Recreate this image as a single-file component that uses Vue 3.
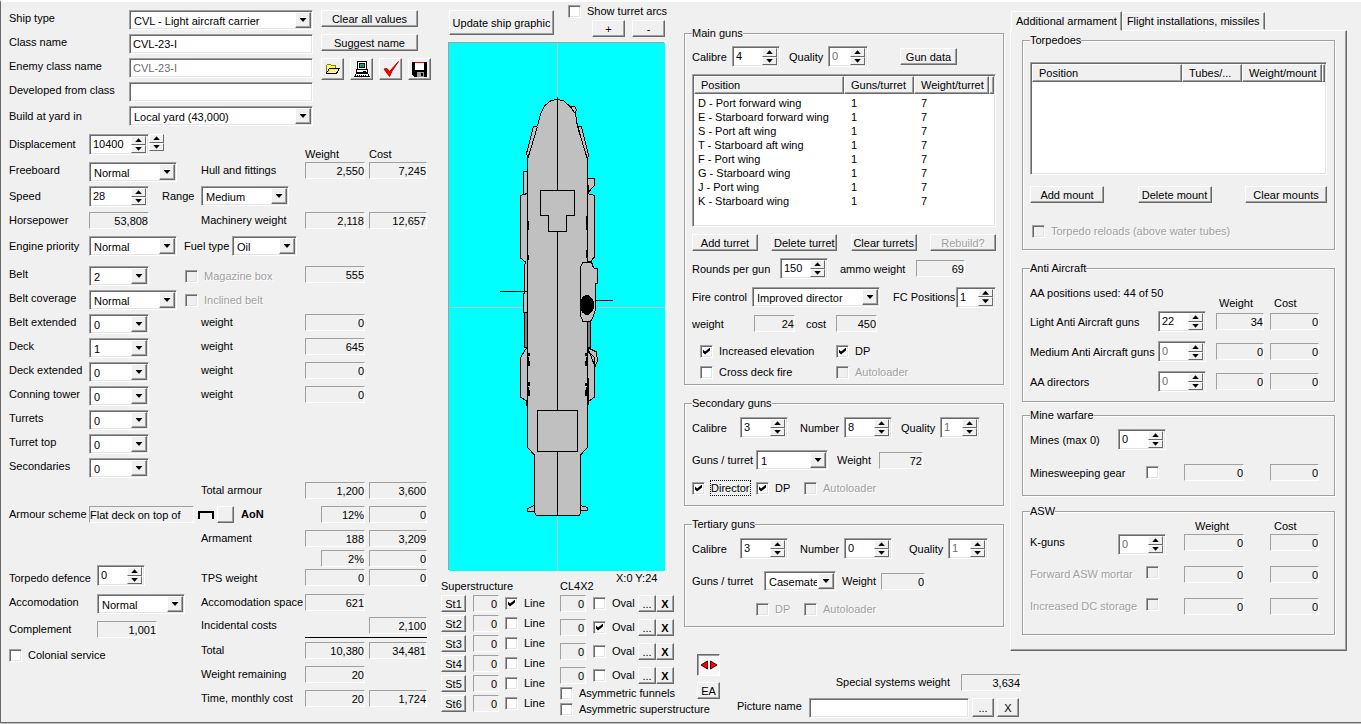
<script setup>
import { h } from 'vue'

const Spin = (p) =>
  h('span', { class: 'spin' }, [
    h('input', { type: 'text', inputmode: 'numeric', id: p.id, value: p.value, disabled: p.disabled }),
    h(Steps, { name: p.id })
  ])
Spin.props = { id: String, value: [String, Number], disabled: Boolean }

const Steps = (p) =>
  h('span', { class: 'steps' }, [
    h('button', { type: 'button', class: 'up', 'aria-label': p.name + ' up' }, [h('i')]),
    h('button', { type: 'button', class: 'down', 'aria-label': p.name + ' down' }, [h('i')])
  ])
Steps.props = { name: String }

const Drop = (p) =>
  h('span', { class: 'drop' }, [
    h('select', { id: p.id }, [h('option', p.value)]),
    h('span', { class: 'arrow' }, [h('i')])
  ])
Drop.props = { id: String, value: String }

const Chk = (p) =>
  h('label', { class: ['chk', { off: p.disabled, focus: p.focus }] }, [
    h('input', { type: 'checkbox', checked: p.checked, disabled: p.disabled }),
    h('span', p.text)
  ])
Chk.props = { text: String, checked: Boolean, disabled: Boolean, focus: Boolean }

const armour = [
  { id: 'belt-extended', label: 'Belt extended', value: '0', weight: '0' },
  { id: 'deck', label: 'Deck', value: '1', weight: '645' },
  { id: 'deck-extended', label: 'Deck extended', value: '0', weight: '0' },
  { id: 'conning-tower', label: 'Conning tower', value: '0', weight: '0' },
  { id: 'turrets', label: 'Turrets', value: '0' },
  { id: 'turret-top', label: 'Turret top', value: '0' },
  { id: 'secondaries', label: 'Secondaries', value: '0' }
]
const turrets = [
  'D - Port forward wing',
  'E - Starboard forward wing',
  'S - Port aft wing',
  'T - Starboard aft wing',
  'F - Port wing',
  'G - Starboard wing',
  'J - Port wing',
  'K - Starboard wing'
]
const antiAir = [
  { id: 'light-aa', label: 'Light Anti Aircraft guns', value: '22', weight: '34', off: false },
  { id: 'medium-aa', label: 'Medium Anti Aircraft guns', value: '0', weight: '0', off: true },
  { id: 'aa-directors', label: 'AA directors', value: '0', weight: '0', off: true }
]
</script>

<template>
  <main class="window">
    <section class="ship">
      <div class="top">
        <div class="names">
          <label for="ship-type">Ship type</label><Drop id="ship-type" value="CVL - Light aircraft carrier" />
          <label for="class-name">Class name</label><input id="class-name" class="box" type="text" value="CVL-23-I" />
          <label for="enemy-name">Enemy class name</label><input id="enemy-name" class="box" type="text" value="CVL-23-I" disabled />
          <label for="developed">Developed from class</label><input id="developed" class="box" type="text" value="" />
          <label for="yard" class="mid">Build at yard in</label><Drop id="yard" value="Local yard (43,000)" />
        </div>
        <div class="actions">
          <button type="button" class="btn wide">Clear all values</button>
          <button type="button" class="btn wide">Suggest name</button>
          <div class="icons">
            <button type="button" class="btn icon" aria-label="Open">
              <svg width="16" height="16" viewBox="0 0 16 16" shape-rendering="crispEdges">
                <path d="M1.500 11.500V4.500L2.500 3.500H5.500L6.500 4.500H10.500V6.500" fill="#ffff66" stroke="#808000" />
                <path d="M1.500 12L4.500 7.500H14.500L11.500 12.500H2Z" fill="#ffe84a" stroke="#000" />
                <path d="M5 9.500H12M4 11.500H11" stroke="#fffbb0" />
              </svg>
            </button>
            <button type="button" class="btn icon" aria-label="Print">
              <svg width="18" height="18" viewBox="0 0 18 18" shape-rendering="crispEdges">
                <rect x="4.500" y="1.500" width="9" height="8" fill="#fff" stroke="#000" />
                <rect x="6.500" y="3.500" width="5" height="4" fill="#00d040" stroke="#000" />
                <rect x="8" y="5" width="2" height="2" fill="#4040ff" />
                <path d="M3.500 9.500H14.500V12.500H3.500Z" fill="#fff" stroke="#000" />
                <path d="M10 11H13" stroke="#000" />
                <path d="M3.500 13.500H14.500L16.500 16.500H1.500Z" fill="#fff" stroke="#000" />
                <path d="M4 15H14" stroke="#000" stroke-dasharray="1 1" />
              </svg>
            </button>
            <button type="button" class="btn icon" aria-label="Check design">
              <svg width="18" height="18" viewBox="0 0 18 18">
                <path d="M2 9L5 8.500L7.500 11.500L16.500 1.500L10 11L7.500 16.500Z" fill="#ff0000" stroke="#c00000" />
              </svg>
            </button>
            <button type="button" class="btn icon" aria-label="Save">
              <svg width="18" height="18" viewBox="0 0 18 18" shape-rendering="crispEdges">
                <path d="M1 2H16V17H3L1 15Z" fill="#000" />
                <rect x="4" y="3" width="9" height="7" fill="#fff" />
                <rect x="4" y="2" width="9" height="1" fill="#ff0000" />
                <rect x="6" y="12" width="7" height="5" fill="#a0a0a0" />
                <rect x="10" y="13" width="2" height="3" fill="#000" />
              </svg>
            </button>
          </div>
        </div>
      </div>

      <div class="row h28">
        <label for="displacement">Displacement</label>
        <div class="pair"><Spin id="displacement" class="w60" value="10400" /><Steps class="free" name="coarse displacement" /></div>
        <span></span><span class="bottom">Weight</span><span class="bottom">Cost</span>
      </div>
      <div class="row">
        <label for="freeboard">Freeboard</label><Drop id="freeboard" class="w88" value="Normal" />
        <span>Hull and fittings</span><output class="w60">2,550</output><output>7,245</output>
      </div>
      <div class="row h26">
        <label for="speed">Speed</label>
        <div class="combo"><Spin id="speed" class="w60" value="28" /><label for="range">Range</label><Drop id="range" class="w88" value="Medium" /></div>
      </div>
      <div class="row">
        <span>Horsepower</span><output class="w60">53,808</output>
        <span>Machinery weight</span><output class="w60">2,118</output><output>12,657</output>
      </div>
      <div class="row h30">
        <label for="engine">Engine priority</label>
        <div class="combo fuel"><Drop id="engine" class="w88" value="Normal" /><label for="fuel">Fuel type</label><Drop id="fuel" class="w65" value="Oil" /></div>
      </div>
      <div class="row">
        <label for="belt">Belt</label>
        <div class="combo belt"><Drop id="belt" class="w60" value="2" /><Chk text="Magazine box" disabled /></div>
        <output class="w60">555</output>
      </div>
      <div class="row">
        <label for="coverage">Belt coverage</label>
        <div class="combo belt"><Drop id="coverage" class="w88" value="Normal" /><Chk text="Inclined belt" disabled /></div>
      </div>
      <div v-for="a in armour" :key="a.id" class="row">
        <label :for="a.id">{{ a.label }}</label><Drop :id="a.id" class="w60" :value="a.value" />
        <template v-if="a.weight"><span>weight</span><output class="w60">{{ a.weight }}</output></template>
      </div>
      <div class="row">
        <span></span><span></span><span>Total armour</span><output class="w60">1,200</output><output>3,600</output>
      </div>
      <div class="row">
        <span>Armour scheme</span>
        <div class="combo scheme">
          <output class="text">Flat deck on top of</output>
          <svg width="16" height="8" viewBox="0 0 16 8" shape-rendering="crispEdges"><path d="M1 8V1H15V8" fill="none" stroke="#000" stroke-width="2" /></svg>
          <button type="button" class="btn blank" aria-label="Change armour scheme"></button>
          <b>AoN</b>
        </div>
        <output class="w44">12%</output><output>0</output>
      </div>
      <div class="row h20">
        <span></span><span></span><span>Armament</span><output class="w60">188</output><output>3,209</output>
      </div>
      <div class="row h15">
        <span></span><span></span><span></span><output class="w44">2%</output><output>0</output>
      </div>
      <div class="row h29">
        <label for="torpedo-defence">Torpedo defence</label><Spin id="torpedo-defence" class="w48 in" value="0" />
        <span>TPS weight</span><output class="w60">0</output><output>0</output>
      </div>
      <div class="row h23">
        <label for="accomodation">Accomodation</label><Drop id="accomodation" class="w88 in" value="Normal" />
        <span>Accomodation space</span><output class="w60">621</output>
      </div>
      <div class="row h20">
        <span class="low">Complement</span><output class="w60 in low">1,001</output>
        <span>Incidental costs</span><span></span><output>2,100</output>
      </div>
      <div class="rule"></div>
      <div class="row">
        <div class="colonial"><Chk text="Colonial service" /></div>
        <span>Total</span><output class="w60">10,380</output><output>34,481</output>
      </div>
      <div class="row">
        <span></span><span></span><span>Weight remaining</span><output class="w60">20</output>
      </div>
      <div class="row">
        <span></span><span></span><span>Time, monthly cost</span><output class="w60">20</output><output>1,724</output>
      </div>
    </section>

    <section class="graphic">
      <div class="gtop">
        <button type="button" class="btn update">Update ship graphic</button>
        <div class="zoom">
          <Chk text="Show turret arcs" />
          <div><button type="button" class="btn">+</button><button type="button" class="btn">-</button></div>
        </div>
      </div>
      <svg class="canvas" viewBox="0 0 216 528" role="img" aria-label="Ship plan">
        <path d="M108.500 0V528M0 264.500H216" stroke="#c0c0c0" />
        <g fill="#c0c0c0" stroke="#000" stroke-width="1">
          <path d="M88.500 83.500H84.500L77.500 110.500L79 116ZM129 83.500H132.500L139.500 112L138 118ZM121.500 65.500L123.500 63H125.500L127.500 66.500L126 70.500Z" />
          <path d="M78.500 128.500H74.500V151.500L71.500 152.500V215L76.500 219L75.500 223V248L74.500 253V269.500H78.500ZM74.500 151.500L78.500 150.500" />
          <path d="M78.500 304L75.500 308L71.500 315V354L78.500 358.500Z" />
          <path d="M138.500 135.500H145.500V142.500L139.500 149ZM138.500 150.500L145.500 152.500V214L141.500 218.500H138.500Z" />
          <path d="M138.500 304.500L147.500 309L148.500 318L146 323.500ZM138.500 308L145.500 314.500V354L139.500 358.500Z" />
          <path d="M75.500 269.500H78.500V304.500H75.500ZM138.500 278.500H141.500V304.500H138.500Z" fill="#808080" />
          <path d="M85.500 462.500L78.500 465.500V468.500H85.500ZM131.500 462.500L138.500 464.500V467.500H131.500Z" />
          <path d="M108.500 56.500L102 57.500L95.500 63L91.500 71L88.500 83.500L78.500 116.500V404.500L85.500 412V469.500L87.500 472.500H130.500L131.500 469.500V412L138.500 404.500V116.500L128.500 83.500L126.500 71L121.500 64L115 58Z" />
          <path d="M108.500 54V472" />
          <path d="M91.500 147.500H125.500V172.500H117.500V188.500H99.500V172.500H91.500ZM88.500 367.500H128.500V408.500H88.500Z" />
          <path d="M133.500 219.500L131.500 224.500V273L134 278.500H141.500L144.500 273L146.500 266V240.500H148.500V225.500L144.500 225L142.500 219Z" />
        </g>
        <g fill="none" stroke="#000">
          <path d="M51 248.500H78M147 257.500H164" />
          <path stroke-width="2" d="M79 178V187M79 212V217M138 173V187M138 207V215M80 310V313M79 314V318M80 318V323M80 339V343M79 344V347M80 347V353M137 310V313M138 314V318M137 318V323M137 340V343M138 344V347M137 347V353M78 358V363M139 358V362" />
        </g>
        <ellipse cx="138" cy="262" rx="7" ry="10" />
      </svg>
      <div class="captions"><span>Superstructure</span><span>CL4X2</span><span class="xy">X:0 Y:24</span></div>
      <div class="parts">
        <div class="lines">
          <div v-for="n in 6" :key="n">
            <button type="button" class="btn">St{{ n }}</button><output>0</output><Chk text="Line" :checked="n === 1" />
          </div>
        </div>
        <div class="ovals">
          <div v-for="n in 4" :key="n">
            <output>0</output><Chk text="Oval" :checked="n === 2" />
            <button type="button" class="btn">...</button><button type="button" class="btn cross">X</button>
          </div>
          <Chk text="Asymmetric funnels" />
          <Chk text="Asymmetric superstructure" />
        </div>
      </div>
    </section>

    <section class="right">
      <div class="guns">
        <fieldset class="main-guns">
          <legend>Main guns</legend>
          <div class="g g-cal">
            <label for="m-cal">Calibre</label><Spin id="m-cal" class="w47" value="4" />
            <label for="m-q">Quality</label><Spin id="m-q" class="w39" value="0" disabled />
            <button type="button" class="btn">Gun data</button>
          </div>
          <div class="list">
            <table>
              <colgroup><col class="c150" /><col class="c70" /><col class="c75" /><col /></colgroup>
              <thead><tr><th>Position</th><th>Guns/turret</th><th>Weight/turret</th><th></th></tr></thead>
              <tbody><tr v-for="t in turrets" :key="t"><td>{{ t }}</td><td>1</td><td>7</td><td></td></tr></tbody>
            </table>
          </div>
          <div class="g g-btn">
            <button type="button" class="btn">Add turret</button><button type="button" class="btn">Delete turret</button>
            <button type="button" class="btn">Clear turrets</button><button type="button" class="btn" disabled>Rebuild?</button>
          </div>
          <div class="g g-rounds">
            <label for="rounds">Rounds per gun</label><Spin id="rounds" class="w47" value="150" />
            <span>ammo weight</span><output>69</output>
          </div>
          <div class="g g-fire">
            <label for="fire">Fire control</label><Drop id="fire" class="w128" value="Improved director" />
            <label for="fc">FC Positions</label><Spin id="fc" class="w39" value="1" />
          </div>
          <div class="g g-weight"><span>weight</span><output>24</output><span>cost</span><output>450</output></div>
          <div class="g g-opts">
            <Chk text="Increased elevation" checked /><Chk text="DP" checked />
            <Chk text="Cross deck fire" /><Chk text="Autoloader" disabled />
          </div>
        </fieldset>

        <fieldset class="sub">
          <legend>Secondary guns</legend>
          <div class="g s-cal">
            <label for="s-cal">Calibre</label><Spin id="s-cal" class="w47" value="3" />
            <label for="s-num">Number</label><Spin id="s-num" class="w47" value="8" />
            <label for="s-q">Quality</label><Spin id="s-q" class="w39" value="1" disabled />
          </div>
          <div class="g s-guns">
            <label for="s-gt">Guns / turret</label><Drop id="s-gt" class="w71" value="1" />
            <span>Weight</span><output>72</output>
          </div>
          <div class="g s-opts"><Chk text="Director" checked focus /><Chk text="DP" checked /><Chk text="Autoloader" disabled /></div>
        </fieldset>

        <fieldset class="sub">
          <legend>Tertiary guns</legend>
          <div class="g s-cal third">
            <label for="t-cal">Calibre</label><Spin id="t-cal" class="w47" value="3" />
            <label for="t-num">Number</label><Spin id="t-num" class="w47" value="0" />
            <label for="t-q">Quality</label><Spin id="t-q" class="w39" value="1" disabled />
          </div>
          <div class="g s-guns third">
            <label for="t-gt">Guns / turret</label><Drop id="t-gt" class="w71" value="Casemates" />
            <span>Weight</span><output>0</output>
          </div>
          <div class="g s-opts"><span></span><Chk text="DP" disabled /><Chk text="Autoloader" disabled /></div>
        </fieldset>
      </div>

      <div class="extra">
        <div class="tabs" role="tablist">
          <button type="button" role="tab" class="tab active" aria-selected="true">Additional armament</button>
          <button type="button" role="tab" class="tab" aria-selected="false">Flight installations, missiles</button>
        </div>
        <div class="panel" role="tabpanel">
          <fieldset class="torpedoes">
            <legend>Torpedoes</legend>
            <div class="list">
              <table>
                <colgroup><col class="c150" /><col class="c60" /><col class="c80" /><col /></colgroup>
                <thead><tr><th>Position</th><th>Tubes/...</th><th>Weight/mount</th><th></th></tr></thead>
              </table>
            </div>
            <div class="mounts">
              <button type="button" class="btn">Add mount</button><button type="button" class="btn">Delete mount</button><button type="button" class="btn last">Clear mounts</button>
            </div>
            <Chk text="Torpedo reloads (above water tubes)" disabled />
          </fieldset>

          <fieldset class="aa">
            <legend>Anti Aircraft</legend>
            <div class="g a-head"><span>AA positions used: 44 of 50</span><span class="bottom">Weight</span><span class="bottom">Cost</span></div>
            <div v-for="a in antiAir" :key="a.id" class="g a-row">
              <label :for="a.id">{{ a.label }}</label><Spin :id="a.id" class="w47" :value="a.value" :disabled="a.off" />
              <output class="w47">{{ a.weight }}</output><output>0</output>
            </div>
          </fieldset>

          <fieldset class="mine">
            <legend>Mine warfare</legend>
            <div class="g w-row"><label for="mines">Mines (max 0)</label><Spin id="mines" class="w47" value="0" /></div>
            <div class="g w-row">
              <label for="gear">Minesweeping gear</label><input id="gear" class="tick" type="checkbox" /><output class="w60">0</output><output>0</output>
            </div>
          </fieldset>

          <fieldset class="asw">
            <legend>ASW</legend>
            <div class="g w-row head"><span></span><span></span><span class="wt">Weight</span><span class="ct">Cost</span></div>
            <div class="g w-row"><label for="kguns">K-guns</label><Spin id="kguns" class="w47" value="0" disabled /><output class="w60">0</output><output>0</output></div>
            <div class="g w-row">
              <label for="mortar" class="dim">Forward ASW mortar</label><input id="mortar" class="tick" type="checkbox" disabled /><output class="w60">0</output><output>0</output>
            </div>
            <div class="g w-row">
              <label for="dc" class="dim">Increased DC storage</label><input id="dc" class="tick" type="checkbox" disabled /><output class="w60">0</output><output>0</output>
            </div>
          </fieldset>
        </div>
      </div>

      <div class="foot">
        <div class="tools">
          <button type="button" class="btn pressed" aria-label="Mirror">
            <svg width="18" height="10" viewBox="0 0 18 10"><path d="M1 5L7.500 1V9ZM17 5L10.500 1V9Z" fill="#ff0000" stroke="#500000" /></svg>
          </button>
          <button type="button" class="btn">EA</button>
        </div>
        <div class="pic">
          <div class="special"><span>Special systems weight</span><output class="w60">3,634</output></div>
          <div class="picture">
            <label for="picture">Picture name</label><input id="picture" class="box" type="text" value="" />
            <button type="button" class="btn">...</button><button type="button" class="btn">X</button>
          </div>
        </div>
      </div>
    </section>
  </main>
</template>

<style>
body { background: #c4c4c4; }
</style>

<style scoped>
.window {
  box-sizing: border-box;
  display: grid;
  grid-template-columns: minmax(435px, 435fr) minmax(248px, 248fr) minmax(677px, 677fr);
  padding-top: 8px;
  border-top: 2px solid #fff;
  border-left: 1px solid #696969;
  border-bottom: 1px solid #696969;
  background: #f0f0f0;
  color: #000;
  font: 11px/16px "Liberation Sans", Arial, sans-serif;
  white-space: nowrap;
}
.window :deep(*) { box-sizing: border-box; }
.window :deep(input), .window :deep(select), .window :deep(button) {
  margin: 0; padding: 0; border: 0; border-radius: 0; appearance: none;
  background: #fff; color: #000; font: inherit; outline: none; min-width: 0;
}
.window :deep(.btn) {
  height: 17px; line-height: 14px; background: #f0f0f0; text-align: center;
  border: 1px solid; border-color: #fff #696969 #696969 #fff;
  box-shadow: inset -1px -1px #a0a0a0;
}
.window :deep(.btn:disabled) { color: #a0a0a0; text-shadow: 1px 1px #fff; }
.window :deep(.spin), .window :deep(.drop), .window :deep(.box), .list {
  display: flex; position: relative; background: #fff;
  border: 1px solid; border-color: #a0a0a0 #fff #fff #a0a0a0;
  box-shadow: inset 1px 1px #696969, inset -1px -1px #e3e3e3;
}
.window :deep(.spin) { height: 21px; padding: 1px 2px 1px 3px; }
.window :deep(.spin input) { flex: 1; width: 0; height: 16px; background: transparent; line-height: 16px; }
.window :deep(input:disabled) { color: #6d6d6d; }
.window :deep(.steps) { display: flex; flex-direction: column; width: 15px; height: 17px; }
.window :deep(.steps button) {
  display: flex; align-items: center; justify-content: center; flex: 1; background: #f0f0f0;
  border: 1px solid; border-color: #fff #696969 #696969 #fff;
}
.window :deep(.steps i) { width: 7px; height: 4px; background: #000; clip-path: polygon(0 0, 100% 0, 50% 100%); }
.window :deep(.steps .up i) { clip-path: polygon(50% 0, 100% 100%, 0 100%); }
.window :deep(.drop) { height: 20px; padding: 2px; }
.window :deep(.drop select) { flex: 1; width: 0; height: 16px; padding: 0 16px 0 2px; background: transparent; line-height: 16px; overflow: hidden; }
.window :deep(.arrow) {
  position: absolute; top: 1px; right: 1px; bottom: 1px; width: 16px; pointer-events: none;
  display: flex; align-items: center; justify-content: center; background: #f0f0f0;
  border: 1px solid; border-color: #fff #696969 #696969 #fff; box-shadow: inset -1px -1px #a0a0a0;
}
.window :deep(.arrow i) { width: 7px; height: 4px; background: #000; clip-path: polygon(0 0, 100% 0, 50% 100%); }
.window .box { height: 20px; padding: 0 3px; }
.window :deep(output) {
  display: block; height: 17px; line-height: 16px; text-align: right;
  border: 1px solid; border-color: #a0a0a0 #fff #fff #a0a0a0;
}
.window :deep(.chk) { display: flex; align-items: center; gap: 6px; height: 16px; }
.window :deep(input[type="checkbox"]) {
  position: relative; flex: none; width: 13px; height: 13px;
  border: 1px solid; border-color: #a0a0a0 #fff #fff #a0a0a0;
  box-shadow: inset 1px 1px #696969, inset -1px -1px #e3e3e3;
}
.window :deep(input[type="checkbox"]:disabled) { background: #f0f0f0; }
.window :deep(input[type="checkbox"]:checked::after) {
  content: ""; position: absolute; left: 2px; top: 2px; width: 7px; height: 7px; background: #000;
  clip-path: polygon(0 29%, 29% 57%, 100% 0, 100% 43%, 29% 100%, 0 71%);
}
.window :deep(.off), .dim { color: #a0a0a0; text-shadow: 1px 1px #fff; }
.window :deep(.focus span) { outline: 1px dotted #000; line-height: 14px; }

.w39 { width: 40px; } .w44 { width: 44px; } .w47 { width: 48px; } .w48 { width: 48px; }
.w60 { width: 60px; } .w65 { width: 65px; } .w71 { width: 72px; } .w88 { width: 88px; } .w128 { width: 128px; }

.ship { padding-left: 8px; }
.top { display: flex; gap: 8px; margin-bottom: 8px; }
.names { display: grid; grid-template-columns: 120px 184px; row-gap: 4px; }
.mid { align-self: center; }
.actions { display: flex; flex-direction: column; gap: 7px; }
.wide { width: 97px; }
.icons { display: flex; gap: 6px; }
.window .icon { display: flex; align-items: center; justify-content: center; width: 23px; height: 22px; }

.row { display: grid; grid-template-columns: 80px 112px 104px 64px 58px; align-items: start; height: 24px; }
.row > .w44 { margin-left: 16px; }
.h15 { height: 15px; } .h20 { height: 20px; } .h23 { height: 23px; } .h26 { height: 26px; }
.h28 { height: 28px; } .h29 { height: 29px; } .h30 { height: 30px; }
.h26 label, .h28 > label, .h30 label { padding-top: 2px; }
.h29 { grid-template-rows: 21px; align-items: end; }
.bottom { align-self: end; }
.row .bottom { padding-top: 12px; }
.in { margin-left: 8px; }
.low { position: relative; top: 4px; }
.pair { display: flex; }
.free { height: 19px; }
.combo { grid-column: span 2; display: grid; grid-template-columns: 73px 39px 104px; align-items: start; }
.fuel { grid-template-columns: 95px 48px 73px; }
.belt { grid-template-columns: 96px 120px; }
.belt .chk { margin-top: 2px; }
.scheme { grid-template-columns: 105px 4px 16px 3px 17px 7px 40px; }
.scheme > :nth-child(1) { grid-column: 1; }
.scheme > :nth-child(2) { grid-column: 3; align-self: center; }
.scheme > :nth-child(3) { grid-column: 5; }
.scheme > :nth-child(4) { grid-column: 7; }
.window .text { text-align: left; overflow: hidden; }
.rule { height: 5px; margin-left: 296px; width: 122px; border-top: 1px solid #000; }
.colonial { grid-column: span 2; padding-top: 5px; }

.graphic { display: flex; flex-direction: column; padding: 0 19px 0 13px; }
.gtop { display: flex; justify-content: space-between; height: 33px; }
.window .update { width: 105px; height: 25px; line-height: 22px; }
.zoom { width: 97px; margin-top: -7px; }
.zoom > div { display: flex; justify-content: flex-end; gap: 7px; margin-top: 1px; }
.zoom .btn { width: 33px; }
.canvas {
  display: block; width: 100%; background: #00ffff; shape-rendering: crispEdges;
  box-shadow: -1px -1px #a0a0a0, 1px 1px #fff;
}
.captions { display: grid; grid-template-columns: 119px 56px 50px; align-items: end; height: 24px; margin-left: -8px; padding-bottom: 1px; }
.xy { align-self: start; line-height: 14px; }
.parts { display: grid; grid-template-columns: 119px 130px; margin-left: -8px; }
.lines > div { display: grid; grid-template-columns: 32px 32px 55px; height: 20px; }
.lines .btn { width: 25px; }
.lines output, .ovals output { width: 26px; padding-right: 1px; }
.ovals > div { display: grid; grid-template-columns: 33px 45px 18px 18px; height: 24px; }
.ovals > div:nth-child(4) { height: 18px; }
.window .cross { font-weight: bold; }

.right { display: grid; grid-template-columns: minmax(320px, 320fr) minmax(337px, 337fr); grid-template-rows: auto auto; column-gap: 6px; padding-right: 14px; }
fieldset { margin: 0; padding: 0 7px; min-width: 0; border: 1px solid #a0a0a0; box-shadow: 1px 1px #fff, inset 1px 1px #fff; }
legend { padding: 0; height: 14px; line-height: 14px; background: #f0f0f0; }
.g { display: grid; align-items: center; }
.guns { padding-top: 16px; }
.main-guns > div { margin-top: 7px; }
.main-guns > .g-cal { grid-template-columns: 40px 57px 39px 72px 57px; margin-top: 6px; }
.main-guns .list { height: 153px; }
.list { overflow: hidden; padding: 1px; align-items: start; }
table { flex: 1; width: 100%; table-layout: fixed; border-collapse: separate; border-spacing: 0; }
.c150 { width: 150px; } .c70 { width: 70px; } .c75 { width: 75px; } .c60 { width: 60px; } .c80 { width: 80px; }
th {
  height: 18px; padding: 0 0 0 6px; text-align: left; font-weight: normal; background: #f0f0f0; overflow: hidden;
  border: 1px solid; border-color: #fff #696969 #696969 #fff; box-shadow: inset -1px -1px #a0a0a0;
}
td { height: 14px; line-height: 14px; padding: 0 0 0 7px; }
td:first-child { padding-left: 4px; }
tbody::before { content: ""; display: table-row; height: 2px; }
.g-btn { grid-template-columns: repeat(4, 66px); justify-content: space-between; padding-right: 0; }
.g-rounds { grid-template-columns: 88px 60px 76px 49px; }
.g-fire { grid-template-columns: 60px 141px 63px 40px; height: 22px; }
.g-weight { grid-template-columns: 62px 52px 30px 41px; }
.g-weight output { width: 41px; }
.main-guns > .g-opts { grid-template-columns: 136px 100px; gap: 5px 0; margin: 11px 0 4px 8px; }
.sub { margin-top: 11px; padding-bottom: 9px; }
.s-cal { grid-template-columns: 48px 60px 44px 57px 39px 40px; margin-top: 7px; }
.s-cal.third { grid-template-columns: 48px 60px 44px 65px 39px 40px; }
.s-guns { grid-template-columns: 64px 81px 42px 44px; margin-top: 12px; }
.s-guns.third { grid-template-columns: 72px 78px 39px 44px; }
.s-opts { grid-template-columns: 64px 48px 90px; margin-top: 10px; }

.tabs { display: flex; align-items: flex-end; height: 20px; margin-left: 1px; }
.window .tab {
  height: 18px; min-width: 134px; padding: 0 4px; background: #f0f0f0; line-height: 16px;
  border: 1px solid; border-color: #fff #696969 transparent #fff; box-shadow: inset -1px 0 #a0a0a0;
}
.window .tab.active { position: relative; height: 20px; min-width: 109px; margin-bottom: -1px; }
.panel {
  padding: 2px 11px 15px; border: 1px solid; border-color: #fff #696969 #696969 #fff;
  box-shadow: inset -1px -1px #a0a0a0;
}
.torpedoes { padding-bottom: 10px; }
.torpedoes .list { height: 113px; margin-top: 15px; }
.mounts { display: grid; grid-template-columns: 74px 74px 82px; justify-content: space-between; margin: 11px 0 20px; }
.torpedoes .chk { margin-left: 2px; }
.aa { margin-top: 11px; padding-bottom: 9px; }
.a-head { grid-template-columns: 189px 55px 49px; height: 26px; align-items: start; margin-top: 10px; }
.a-head .bottom { align-self: end; }
.a-row { grid-template-columns: 128px 58px 54px 49px; margin-bottom: 9px; }
.a-row:last-child { margin-bottom: 0; }
.mine { margin-top: 6px; padding-bottom: 14px; }
.w-row { grid-template-columns: 88px 66px 86px 49px; }
.window .tick { margin-left: 28px; justify-self: start; }
.mine .w-row { margin-top: 7px; }
.mine .w-row + .w-row { margin-top: 14px; }
.asw { margin-top: 8px; padding-bottom: 4px; }
.asw .w-row { height: 32px; align-items: start; }
.asw .head { height: 16px; }
.wt { padding-left: 11px; }
.ct { padding-left: 4px; }

.foot { grid-column: 1 / -1; display: flex; gap: 17px; padding: 3px 0 4px 13px; }
.tools { display: flex; flex-direction: column; gap: 6px; width: 23px; }
.window .pressed {
  height: 22px; display: flex; align-items: center; justify-content: center; background: #f8f8f8;
  border-color: #696969 #fff #fff #696969; box-shadow: inset 1px 1px #a0a0a0;
}
.pic { width: 284px; padding-top: 20px; }
.special { display: flex; justify-content: flex-end; gap: 11px; height: 24px; }
.picture { display: grid; grid-template-columns: 69px 160px 22px 22px; column-gap: 3px; }
.picture .btn { height: 19px; }
</style>
